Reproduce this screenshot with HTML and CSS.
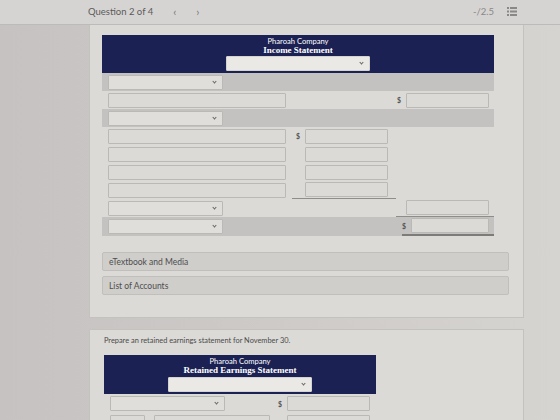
FILE: index.html
```html
<!DOCTYPE html>
<html lang="en">
<head>
  <meta charset="UTF-8">
  <title>Question 2 of 4</title>
  <link rel="stylesheet" href="styles.css">
</head>
<body>
  <header class="topbar">
    <div class="q-nav">
      <span class="q-title">Question 2 of 4</span>
      <span class="arrow">&lsaquo;</span>
      <span class="arrow">&rsaquo;</span>
    </div>
    <div class="score">
      <span>-/2.5</span>
      <svg class="list-icon" width="10" height="9" viewBox="0 0 10 9">
        <g fill="#8a8886">
          <rect x="0" y="0" width="2" height="2"/><rect x="3" y="0" width="7" height="2"/>
          <rect x="0" y="3.5" width="2" height="2"/><rect x="3" y="3.5" width="7" height="2"/>
          <rect x="0" y="7" width="2" height="2"/><rect x="3" y="7" width="7" height="2"/>
        </g>
      </svg>
    </div>
  </header>

  <main class="page">
    <div class="column">
      <section class="card card-first">
        <div class="sheet sheet-income">
          <div class="sheet-head">
            <div class="company">Pharoah Company</div>
            <div class="statement">Income Statement</div>
            <div class="select head-select"><span class="chev"></span></div>
          </div>

          <div class="row band">
            <div class="cell a"><div class="select"><span class="chev"></span></div></div>
            <div class="cell b"></div>
            <div class="cell c"></div>
          </div>
          <div class="row">
            <div class="cell a"><div class="input long"></div></div>
            <div class="cell b"></div>
            <div class="cell c"><span class="dollar">$</span><div class="input num"></div></div>
          </div>
          <div class="row band">
            <div class="cell a"><div class="select"><span class="chev"></span></div></div>
            <div class="cell b"></div>
            <div class="cell c"></div>
          </div>
          <div class="row">
            <div class="cell a"><div class="input long"></div></div>
            <div class="cell b"><span class="dollar">$</span><div class="input num"></div></div>
            <div class="cell c"></div>
          </div>
          <div class="row">
            <div class="cell a"><div class="input long"></div></div>
            <div class="cell b"><div class="input num"></div></div>
            <div class="cell c"></div>
          </div>
          <div class="row">
            <div class="cell a"><div class="input long"></div></div>
            <div class="cell b"><div class="input num"></div></div>
            <div class="cell c"></div>
          </div>
          <div class="row">
            <div class="cell a"><div class="input long"></div></div>
            <div class="cell b rule"><div class="input num"></div></div>
            <div class="cell c"></div>
          </div>
          <div class="row">
            <div class="cell a"><div class="select"><span class="chev"></span></div></div>
            <div class="cell b"></div>
            <div class="cell c rule"><div class="input num"></div></div>
          </div>
          <div class="row band last">
            <div class="cell a"><div class="select"><span class="chev"></span></div></div>
            <div class="cell b"></div>
            <div class="cell c double"><span class="dollar">$</span><div class="input num"></div></div>
          </div>
        </div>

        <div class="resource">eTextbook and Media</div>
        <div class="resource">List of Accounts</div>
      </section>

      <section class="card card-second">
        <p class="prompt">Prepare an retained earnings statement for November 30.</p>
        <div class="sheet sheet-retained">
          <div class="sheet-head">
            <div class="company">Pharoah Company</div>
            <div class="statement">Retained Earnings Statement</div>
            <div class="select head-select"><span class="chev"></span></div>
          </div>
          <div class="row">
            <div class="cell a"><div class="select"><span class="chev"></span></div></div>
            <div class="cell b"><span class="dollar">$</span><div class="input num"></div></div>
          </div>
          <div class="row">
            <div class="cell a"><div class="input short"></div><div class="input mid"></div></div>
            <div class="cell b"><div class="input num"></div></div>
          </div>
        </div>
      </section>
    </div>
  </main>
</body>
</html>
```

FILE: styles.css
```css
:root {
  --navy: #1b2153;
  --card: #dcdad7;
  --band: #c3c2c0;
  --field: #dbdad7;
  --field-border: #bab9b6;
  --text: #4a4a4a;
  --font: 'Lato', 'Open Sans', sans-serif;
}
* {
  box-sizing: border-box;
}
body {
  margin: 0;
  width: 560px;
  height: 420px;
  overflow: hidden;
  font-family: var(--font);
  color: var(--text);
  background: linear-gradient(to right, #c6c2c1 0, #cfccca 60%, #d6d4d1 100%);
}

/* top bar */
.topbar {
  height: 25px;
  display: flex;
  align-items: center;
  justify-content: space-between;
  padding: 0 43px 2px 88px;
  background: #d6d4d2;
  border-bottom: 1px solid #bdbbb9;
}
.q-nav {
  display: flex;
  align-items: center;
  font-size: 9.5px;
  color: #5a5a5a;
}
.arrow {
  margin-left: 20px;
  font-size: 11px;
  color: #777;
}
.arrow + .arrow {
  margin-left: 20px;
}
.score {
  display: flex;
  align-items: center;
  gap: 13px;
  font-size: 9.5px;
  color: #8a8886;
}

/* content column */
.page {
  padding-left: 89px;
}
.column {
  width: 435px;
}
.card {
  background: var(--card);
  border: 1px solid #c4c2bf;
}
.card-first {
  border-top: none;
  padding: 10px 13px 22px 12px;
}
.card-second {
  margin-top: 11px;
  padding: 6px 14px 0 14px;
  height: 100px;
}

/* statement sheets */
.sheet-income {
  width: 392px;
}
.sheet-retained {
  width: 272px;
}
.sheet-head {
  background: var(--navy);
  color: #fff;
  text-align: center;
  padding: 2px 0 2px;
  display: flex;
  flex-direction: column;
  align-items: center;
}
.company {
  font-size: 7.6px;
  line-height: 9px;
}
.statement {
  font-family: 'Liberation Serif', serif;
  font-weight: bold;
  font-size: 9px;
  line-height: 9px;
}

.row {
  display: grid;
  grid-template-columns: 190px 104px 98px;
  height: 18px;
}
.sheet-retained .row {
  grid-template-columns: 172px 100px;
  height: 19px;
}
.row.band {
  background: var(--band);
}
.row.last {
  height: 19px;
}
.cell {
  display: flex;
  align-items: center;
}
.cell.a {
  padding-left: 6px;
  gap: 9px;
}
.cell.b {
  justify-content: flex-end;
  padding-right: 8px;
}
.cell.c {
  justify-content: flex-end;
  padding-right: 5px;
}
.sheet-retained .cell.b {
  padding-right: 6px;
}
.cell.rule {
  border-bottom: 1px solid #8e8d8b;
}
.cell.double {
  border-bottom: 2px solid #7d7c7a;
  margin-left: 6px;
}

.dollar {
  font-size: 7px;
  font-weight: bold;
  color: #555;
  margin-right: 5px;
}
.input, .select {
  height: 15px;
  background: var(--field);
  border: 1px solid var(--field-border);
  border-radius: 1px;
}
.input.long {
  width: 178px;
}
.input.num {
  width: 83px;
}
.input.short {
  width: 35px;
}
.input.mid {
  width: 116px;
}
.select {
  position: relative;
  width: 115px;
  background: #dfdedb;
}
.select.head-select {
  margin-top: 1px;
  width: 144px;
  background: #eae9e6;
  border-color: #d4d3d0;
}
.sheet-retained .select.head-select {
  margin-top: 2px;
}
.chev {
  position: absolute;
  right: 6px;
  top: 4px;
  width: 3px;
  height: 3px;
  border-right: 1.2px solid #666;
  border-bottom: 1.2px solid #666;
  transform: rotate(45deg);
}

/* resource links */
.resource {
  width: 407px;
  height: 19px;
  margin-top: 5px;
  padding-left: 6px;
  display: flex;
  align-items: center;
  font-size: 8.5px;
  color: #4d4d4d;
  background: #cfcecb;
  border: 1px solid #c0bfbc;
  border-radius: 2px;
}
.sheet + .resource {
  margin-top: 16px;
}

.prompt {
  margin: 0 0 10px;
  font-size: 7.4px;
  line-height: 9px;
  color: #4a4a4a;
}
```
